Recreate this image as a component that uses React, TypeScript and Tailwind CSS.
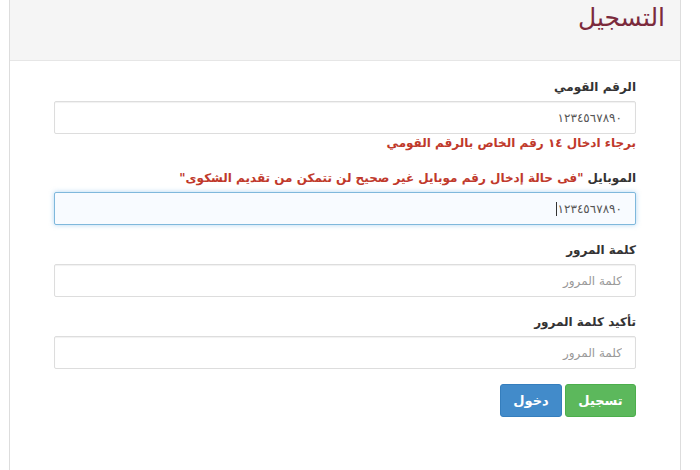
import React from "react"

const font = { fontFamily: '"DejaVu Sans", "Noto Sans", sans-serif' }

function Field({ label, children }: { label: React.ReactNode; children: React.ReactNode }) {
  return (
    <div className="flex flex-col">
      <label className="text-[12px] font-bold text-[#333] leading-[16px] mb-[6px]">{label}</label>
      {children}
    </div>
  )
}

const inputCls =
  "w-full h-[33px] px-[13px] text-[12px] text-[#555] bg-white border border-[#ddd] rounded-[2px] shadow-[inset_0_1px_1px_rgba(0,0,0,0.06)] outline-none placeholder:text-[#999]"

export default function App() {
  return (
    <div dir="rtl" style={font} className="w-[700px] h-[470px] bg-white overflow-hidden">
      <div className="mr-[19px] ml-[9px] h-[490px] border-x border-b border-[#ddd] flex flex-col">
        <div className="h-[61px] bg-[#f5f5f5] border-b border-[#e6e6e6] px-[15px] pt-[2px]">
          <h1 className="text-[25px] leading-[32px] text-[#7b2a3c]">التسجيل</h1>
        </div>

        <div className="flex flex-col px-[44px] pt-[18px]">
          <Field label="الرقم القومي">
            <input readOnly className={inputCls} defaultValue="١٢٣٤٥٦٧٨٩٠" />
          </Field>
          <p className="text-[12px] font-bold text-[#c0392b] leading-[16px] mt-[1px]">
            برجاء ادخال ١٤ رقم الخاص بالرقم القومي
          </p>

          <div className="mt-[19px]">
            <Field
              label={
                <>
                  الموبايل{" "}
                  <span className="text-[#c0392b]">"فى حالة إدخال رقم موبايل غير صحيح لن تتمكن من تقديم الشكوى"</span>
                </>
              }
            >
              <div className="w-full h-[33px] px-[13px] flex items-center text-[12px] text-[#555] bg-[#f8fbff] border border-[#7fb8dc] rounded-[2px] shadow-[0_0_5px_rgba(102,175,233,0.5)]">
                <span>١٢٣٤٥٦٧٨٩٠</span>
                <span className="w-px h-[14px] bg-[#333] mr-[1px]" />
              </div>
            </Field>
          </div>

          <div className="mt-[17px]">
            <Field label="كلمة المرور">
              <input readOnly className={inputCls} placeholder="كلمة المرور" />
            </Field>
          </div>

          <div className="mt-[17px]">
            <Field label="تأكيد كلمة المرور">
              <input readOnly className={inputCls} placeholder="كلمة المرور" />
            </Field>
          </div>

          <div className="flex gap-[3px] mt-[15px]">
            <button className="h-[33px] w-[71px] rounded-[3px] bg-[#5cb85c] border border-[#4cae4c] text-white text-[13px] font-bold">
              تسجيل
            </button>
            <button className="h-[33px] w-[62px] rounded-[3px] bg-[#428bca] border border-[#357ebd] text-white text-[13px] font-bold">
              دخول
            </button>
          </div>
        </div>
      </div>
    </div>
  )
}
